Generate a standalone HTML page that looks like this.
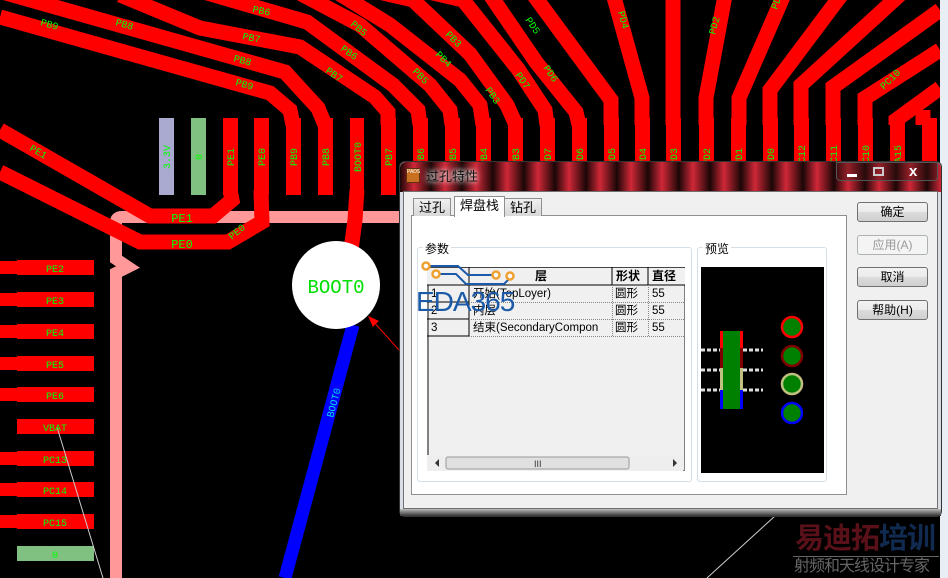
<!DOCTYPE html>
<html><head><meta charset="utf-8"><style>
*{margin:0;padding:0;box-sizing:border-box}
body{width:948px;height:578px;overflow:hidden;background:#000;position:relative;font-family:"Liberation Sans","Noto Sans CJK SC",sans-serif}
.abs{position:absolute}
.btn{position:absolute;left:857px;width:71px;height:20px;border:1px solid #707070;border-radius:3px;background:linear-gradient(#f2f2f2,#ebebeb 50%,#dcdcdc 51%,#cfcfcf);font-size:12px;text-align:center;line-height:18px;color:#000}
.tab{position:absolute;top:198px;height:18px;border:1px solid #8e8f8f;border-bottom:none;background:linear-gradient(#f0f0f0,#d8d8d8);font-size:13px;line-height:17px;padding:0 5px}
.cell{position:absolute;font-size:11.5px;line-height:16px;white-space:nowrap;overflow:hidden}
</style></head><body>
<svg class="abs" style="left:0;top:0" width="948" height="578" viewBox="0 0 948 578">
<path d="M116,578 V273 L128,267 L116,259 V222 Q116,217 122,217 H420" fill="none" stroke="#ff9999" stroke-width="12"/>
<g fill="none" stroke="#ff0000" stroke-width="15" stroke-linejoin="miter">
<polyline points="0,17 270,93 290,110 293,125"/>
<polyline points="-5,-10 285,72 318,108 325,125"/>
<polyline points="120,-5 200,28 300,47 375,97 388,112 388,125"/>
<polyline points="190,-12 307,22 393,85 418,110 420,125"/>
<polyline points="290,-12 360,25 430,85 450,110 452,125"/>
<polyline points="330,-12 390,25 460,80 480,105 483,125"/>
<polyline points="370,-10 413,0 470,54 507,105 516,125"/>
<polyline points="420,-10 463,0 518,69 545,110 547,125"/>
<polyline points="480,-20 536,62 576,112 579,125"/>
<polyline points="530,-10 611,100 611,125"/>
<polyline points="612,-10 642,98 642,125"/>
<polyline points="673,-10 673,125"/>
<polyline points="726,-10 706,98 706,125"/>
<polyline points="786,-10 739,98 739,125"/>
<polyline points="845,-10 770,90 770,125"/>
<polyline points="905,-10 801,85 801,125"/>
<polyline points="940,10 833,87 833,125"/>
<polyline points="940,50 865,98 865,125"/>
<polyline points="940,88 896,120 896,125"/>
<polyline points="923,110 923,125"/>
<polyline points="0,130 150,216 213,216 232,200 230,190"/>
<polyline points="0,172 140,242 228,242 262,222 261,190"/>
<polyline points="357,190 355,220 351,250"/>
</g>
<g fill="#ff0000">
<rect x="223" y="118" width="15" height="77"/><rect x="254" y="118" width="15" height="77"/>
<rect x="286" y="118" width="15" height="77"/><rect x="318" y="118" width="15" height="77"/>
<rect x="350" y="118" width="14" height="77"/><rect x="381" y="118" width="15" height="77"/>
<rect x="413" y="118" width="15" height="77"/><rect x="445" y="118" width="15" height="77"/>
<rect x="476" y="118" width="15" height="77"/><rect x="508" y="118" width="15" height="77"/>
<rect x="540" y="118" width="15" height="77"/><rect x="572" y="118" width="15" height="77"/>
<rect x="604" y="118" width="15" height="77"/><rect x="635" y="118" width="15" height="77"/>
<rect x="666" y="118" width="15" height="77"/><rect x="699" y="118" width="15" height="77"/>
<rect x="731" y="118" width="15" height="77"/><rect x="763" y="118" width="15" height="77"/>
<rect x="794" y="118" width="15" height="77"/><rect x="826" y="118" width="15" height="77"/>
<rect x="858" y="118" width="15" height="77"/><rect x="890" y="118" width="15" height="77"/>
<rect x="922" y="118" width="15" height="77"/>
</g>
<rect x="159" y="118" width="15" height="77" fill="#aaaad0"/>
<rect x="191" y="118" width="15" height="77" fill="#80c080"/>
<g fill="#ff0000">
<rect x="17" y="260" width="77" height="15"/><rect x="0" y="261" width="17" height="13"/>
<rect x="17" y="292" width="77" height="15"/><rect x="0" y="293" width="17" height="13"/>
<rect x="17" y="324" width="77" height="15"/><rect x="0" y="325" width="17" height="13"/>
<rect x="17" y="356" width="77" height="15"/><rect x="0" y="357" width="17" height="13"/>
<rect x="17" y="387" width="77" height="15"/><rect x="0" y="388" width="17" height="13"/>
<rect x="17" y="419" width="77" height="15"/>
<rect x="17" y="451" width="77" height="15"/><rect x="0" y="452" width="17" height="13"/>
<rect x="17" y="482" width="77" height="15"/><rect x="0" y="483" width="17" height="13"/>
<rect x="17" y="514" width="77" height="15"/><rect x="0" y="515" width="17" height="13"/>
</g>
<rect x="17" y="546" width="77" height="15" fill="#80c080"/>
<line x1="353" y1="325" x2="285" y2="578" stroke="#0000ff" stroke-width="13"/>
<circle cx="336" cy="285" r="44" fill="#fff"/>
<text x="336" y="293" font-family="Liberation Mono,monospace" font-size="19" fill="#00e000" text-anchor="middle">BOOT0</text>
<text transform="translate(333,418) rotate(-75)" font-family="Liberation Mono,monospace" font-size="10" fill="#00e0e0">BOOT0</text>
<g stroke="#ccc" stroke-width="1"><line x1="57" y1="427" x2="103" y2="578"/><line x1="775" y1="516" x2="707" y2="578"/></g>
<g font-family="Liberation Mono,monospace" font-size="10" fill="#00ff00">
<text x="55" y="272" text-anchor="middle">PE2</text><text x="55" y="304" text-anchor="middle">PE3</text>
<text x="55" y="336" text-anchor="middle">PE4</text><text x="55" y="368" text-anchor="middle">PE5</text>
<text x="55" y="399" text-anchor="middle">PE6</text><text x="55" y="431" text-anchor="middle">VBAT</text>
<text x="55" y="463" text-anchor="middle">PC13</text><text x="55" y="494" text-anchor="middle">PC14</text>
<text x="55" y="526" text-anchor="middle">PC15</text><text x="55" y="558" text-anchor="middle">0</text>
<text x="182" y="222" font-size="12" text-anchor="middle">PE1</text>
<text x="182" y="248" font-size="12" text-anchor="middle">PE0</text>
<g text-anchor="middle">
<text transform="translate(170,157) rotate(-90)">3.3V</text><text transform="translate(202,157) rotate(-90)">0</text>
<text transform="translate(234,157) rotate(-90)">PE1</text><text transform="translate(265,157) rotate(-90)">PE0</text>
<text transform="translate(297,157) rotate(-90)">PB9</text><text transform="translate(329,157) rotate(-90)">PB8</text>
<text transform="translate(361,157) rotate(-90)">BOOT0</text><text transform="translate(392,157) rotate(-90)">PB7</text>
<text transform="translate(424,157) rotate(-90)">PB6</text><text transform="translate(456,157) rotate(-90)">PB5</text>
<text transform="translate(487,157) rotate(-90)">PB4</text><text transform="translate(519,157) rotate(-90)">PB3</text>
<text transform="translate(551,157) rotate(-90)">PD7</text><text transform="translate(583,157) rotate(-90)">PD6</text>
<text transform="translate(615,157) rotate(-90)">PD5</text><text transform="translate(646,157) rotate(-90)">PD4</text>
<text transform="translate(677,157) rotate(-90)">PD3</text><text transform="translate(710,157) rotate(-90)">PD2</text>
<text transform="translate(742,157) rotate(-90)">PD1</text><text transform="translate(774,157) rotate(-90)">PD0</text>
<text transform="translate(805,157) rotate(-90)">PC12</text><text transform="translate(837,157) rotate(-90)">PC11</text>
<text transform="translate(869,157) rotate(-90)">PC10</text><text transform="translate(901,157) rotate(-90)">PA15</text>
</g>
<text transform="translate(235,85) rotate(16)">PB9</text><text transform="translate(40,25) rotate(16)">PB9</text>
<text transform="translate(233,61) rotate(16)">PB8</text><text transform="translate(115,25) rotate(16)">PB8</text>
<text transform="translate(242,39) rotate(12)">PB7</text><text transform="translate(325,72) rotate(35)">PB7</text>
<text transform="translate(252,12) rotate(12)">PB6</text><text transform="translate(340,50) rotate(35)">PB6</text>
<text transform="translate(350,25) rotate(40)">PB5</text><text transform="translate(412,72) rotate(45)">PB5</text>
<text transform="translate(435,55) rotate(45)">PB4</text><text transform="translate(445,35) rotate(45)">PB3</text>
<text transform="translate(485,90) rotate(55)">PB3</text><text transform="translate(515,75) rotate(55)">PD7</text>
<text transform="translate(543,68) rotate(55)">PD6</text><text transform="translate(525,20) rotate(55)">PD5</text>
<text transform="translate(618,12) rotate(75)">PD4</text><text transform="translate(715,35) rotate(-75)">PD2</text>
<text transform="translate(777,10) rotate(-70)">PD1</text><text transform="translate(884,90) rotate(-45)">PC10</text>
<text transform="translate(29,150) rotate(30)">PE1</text><text transform="translate(232,240) rotate(-40)">PE0</text>
</g>
<g stroke="#ff0000" stroke-width="1" fill="#ff0000">
<line x1="462" y1="420" x2="372" y2="320"/><path d="M369,317 L378,321 L373,326Z"/>
<line x1="477" y1="432" x2="514" y2="340"/><path d="M516,335 L517,346 L510,343Z"/>
</g>
<rect x="940" y="0" width="8" height="578" fill="#e8eef4"/>
</svg>

<!-- dialog -->
<div class="abs" style="left:399px;top:161px;width:543px;height:356px;border:1px solid #333;border-radius:6px;background:#d8dde4"></div>
<div class="abs" style="left:400px;top:162px;width:541px;height:30px;border-radius:6px 6px 0 0;background:repeating-linear-gradient(90deg,#1a0606 0,#d02838 14px,#1a0606 31px)"></div>
<div class="abs" style="left:400px;top:509px;width:541px;height:7px;background:linear-gradient(#bbb,#333)"></div>
<div class="abs" style="left:406px;top:168px;width:14px;height:15px;background:#c87020;border:1px solid #603010;font-size:5px;color:#fff;line-height:7px;text-align:center">PADS</div>
<div class="abs" style="left:426px;top:166px;font-size:13px;color:#111;text-shadow:0 0 4px #fff,0 0 8px #fff">过孔特性</div>
<div class="abs" style="left:836px;top:162px;width:102px;height:19px;border:1px solid #555;border-radius:0 0 4px 4px;background:rgba(60,20,20,.4)"></div>
<div class="abs" style="left:847px;top:174px;width:10px;height:3px;background:#fff"></div>
<div class="abs" style="left:873px;top:167px;width:11px;height:9px;border:2px solid #ccc"></div>
<div class="abs" style="left:909px;top:163px;color:#fff;font-size:15px;font-weight:bold">x</div>
<div class="abs" style="left:403px;top:191px;width:535px;height:318px;background:#f0f0f0;border:1px solid #707070"></div>
<div class="abs" style="left:411px;top:215px;width:436px;height:280px;background:#fff;border:1px solid #8e8f8f"></div>
<div class="tab" style="left:413px">过孔</div>
<div class="tab" style="left:454px;top:196px;height:21px;background:#fff;z-index:2">焊盘栈</div>
<div class="tab" style="left:504px">钻孔</div>
<div class="abs" style="left:417px;top:247px;width:275px;height:235px;border:1px solid #d5dfe5;border-radius:3px"></div>
<div class="abs" style="left:423px;top:240px;font-size:12px;background:#fff;padding:0 2px">参数</div>
<div class="abs" style="left:697px;top:247px;width:130px;height:235px;border:1px solid #d5dfe5;border-radius:3px"></div>
<div class="abs" style="left:703px;top:240px;font-size:12px;background:#fff;padding:0 2px">预览</div>
<div class="abs" style="left:427px;top:267px;width:258px;height:204px;border:1px solid #808080;border-left:2px solid #808080;background:#f0f0f0"></div>
<svg class="abs" style="left:427px;top:267px" width="258" height="204">
<rect x="0" y="0" width="258" height="18" fill="#f0f0f0"/>
<line x1="0" y1="0.5" x2="258" y2="0.5" stroke="#444"/><line x1="0" y1="18" x2="258" y2="18" stroke="#000"/>
<line x1="42" y1="0" x2="42" y2="69" stroke="#000"/>
<line x1="185" y1="0" x2="185" y2="18" stroke="#000"/><line x1="221" y1="0" x2="221" y2="18" stroke="#000"/>
<line x1="0" y1="35" x2="42" y2="35" stroke="#000"/><line x1="0" y1="52" x2="42" y2="52" stroke="#000"/><line x1="0" y1="69" x2="42" y2="69" stroke="#000"/>
<g stroke="#888" stroke-dasharray="1,1"><line x1="42" y1="35.5" x2="258" y2="35.5"/><line x1="42" y1="52.5" x2="258" y2="52.5"/><line x1="42" y1="69.5" x2="258" y2="69.5"/>
<line x1="185.5" y1="18" x2="185.5" y2="69"/><line x1="221.5" y1="18" x2="221.5" y2="69"/></g>
<rect x="0" y="188" width="256" height="16" fill="#eee"/>
<rect x="19" y="190" width="183" height="12" rx="2" fill="#e0e0e0" stroke="#999"/>
<text x="107" y="200" font-size="9" fill="#333">III</text>
<path d="M12,192 l-4,4 4,4Z M246,192 l4,4 -4,4Z" fill="#333"/>
</svg>
<div class="cell" style="left:535px;top:268px;font-size:12px;font-weight:bold">层</div>
<div class="cell" style="left:616px;top:268px;font-size:12px;font-weight:bold">形状</div>
<div class="cell" style="left:652px;top:268px;font-size:12px;font-weight:bold">直径</div>
<div class="cell" style="left:431px;top:286px">1</div><div class="cell" style="left:473px;top:286px">开始(TopLoyer)</div>
<div class="cell" style="left:615px;top:286px">圆形</div><div class="cell" style="left:652px;top:286px">55</div>
<div class="cell" style="left:431px;top:303px">2</div><div class="cell" style="left:473px;top:303px">内层</div>
<div class="cell" style="left:615px;top:303px">圆形</div><div class="cell" style="left:652px;top:303px">55</div>
<div class="cell" style="left:431px;top:320px">3</div><div class="cell" style="left:473px;top:320px;width:138px">结束(SecondaryCompon</div>
<div class="cell" style="left:615px;top:320px">圆形</div><div class="cell" style="left:652px;top:320px">55</div>
<svg class="abs" style="left:418px;top:260px" width="120" height="60">
<g fill="none" stroke="#1a5aa8" stroke-width="2"><path d="M8,6 H40 L50,15 H78"/><path d="M18,14 H38 L48,24 H86 L92,18"/></g>
<g fill="#fff" stroke="#f0a030" stroke-width="2.5"><circle cx="8" cy="6" r="3.5"/><circle cx="18" cy="14" r="3.5"/><circle cx="78" cy="15" r="3.5"/><circle cx="92" cy="16" r="3.5"/></g>
</svg>
<div class="abs" style="left:416px;top:286px;font-size:28px;color:#1a5aa8;letter-spacing:-1px;line-height:32px">EDA365</div>
<svg class="abs" style="left:701px;top:267px" width="123" height="206">
<rect width="123" height="206" fill="#000"/>
<g stroke="#ddd" stroke-width="3" stroke-dasharray="4,2"><line x1="0" y1="83" x2="62" y2="83"/><line x1="0" y1="103" x2="62" y2="103"/><line x1="0" y1="123" x2="62" y2="123"/></g>
<rect x="19" y="64" width="23" height="17" fill="#ff0000"/><rect x="19" y="81" width="23" height="20" fill="#800000"/>
<rect x="19" y="101" width="23" height="22" fill="#c0c080"/><rect x="19" y="123" width="23" height="19" fill="#0000ff"/>
<rect x="22" y="64" width="17" height="78" fill="#008000"/>
<g fill="#008000" stroke-width="2.5"><circle cx="91" cy="60" r="10" stroke="#ff0000"/><circle cx="91" cy="89" r="10" stroke="#800000"/><circle cx="91" cy="117" r="10" stroke="#c0c080"/><circle cx="91" cy="146" r="10" stroke="#0000ff"/></g>
</svg>
<div class="btn" style="top:202px">确定</div>
<div class="btn" style="top:235px;color:#999;border-color:#adb2b5;background:#f4f4f4">应用(A)</div>
<div class="btn" style="top:267px">取消</div>
<div class="btn" style="top:300px">帮助(H)</div>
<div class="abs" style="left:795px;top:523px;font-size:29px;font-weight:bold;color:#5a1018;letter-spacing:-1px;line-height:32px">易迪拓<span style="color:#102a50">培训</span></div>
<div class="abs" style="left:793px;top:556px;width:146px;height:1px;background:#666"></div>
<div class="abs" style="left:794px;top:558px;font-size:16px;color:#666;line-height:18px;letter-spacing:-1px">射频和天线设计专家</div>
</body></html>
